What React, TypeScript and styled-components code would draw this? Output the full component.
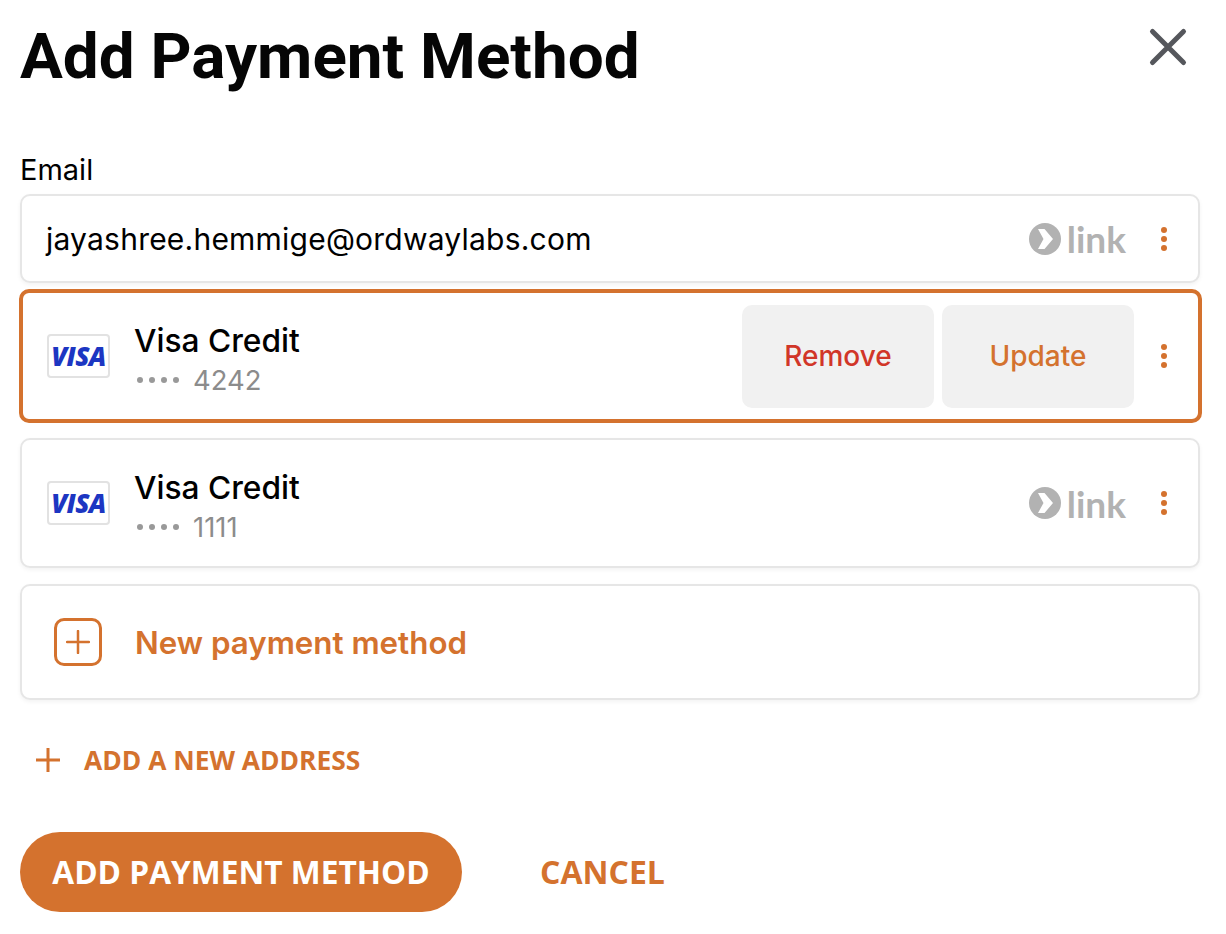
import React from "react";
import styled, { createGlobalStyle } from "styled-components";

const ORANGE = "#d4722e";

const Global = createGlobalStyle`
  html, body { margin: 0; padding: 0; background: #fff; }
  body { font-family: Inter, "Liberation Sans", sans-serif; color: #000; }
  * { box-sizing: border-box; }
`;

const Page = styled.div`
  width: 1226px;
  height: 934px;
  padding: 0 26px 0 20px;
  display: flex;
  flex-direction: column;
  overflow: hidden;
`;

const Header = styled.header`
  height: 110px;
  display: flex;
  justify-content: space-between;
  align-items: flex-start;
`;

const Title = styled.h1`
  margin: 18px 0 0;
  font-family: Roboto, sans-serif;
  font-weight: 700;
  font-size: 63.8px;
  line-height: 78px;
  color: #050505;
`;

const CloseButton = styled.button`
  border: 0;
  background: none;
  padding: 0;
  margin: 22px 7px 0 0;
  width: 50px;
  height: 50px;
  display: flex;
  align-items: center;
  justify-content: center;
`;

const Label = styled.label`
  display: block;
  margin-top: 41px;
  height: 43px;
  font-size: 29px;
  line-height: 38px;
  font-weight: 400;
`;

const Card = styled.div<{ $h: number; $mt: number; $active?: boolean }>`
  height: ${(p) => p.$h}px;
  margin-top: ${(p) => p.$mt}px;
  margin-left: ${(p) => (p.$active ? -1 : 0)}px;
  margin-right: ${(p) => (p.$active ? -2 : 0)}px;
  border-radius: 10px;
  background: #fff;
  border: ${(p) => (p.$active ? `4px solid ${ORANGE}` : "2px solid #e6e6e6")};
  box-shadow: ${(p) => (p.$active ? "none" : "0 2px 4px rgba(0,0,0,0.05)")};
  padding: 0 24px;
  padding-left: ${(p) => (p.$active ? 24 : 25)}px;
  display: flex;
  align-items: center;
`;

const EmailRow = styled.span`
  margin-left: -1px;
  font-size: 30px;
  letter-spacing: 0.22px;
  flex: 1;
`;

const VisaBadge = styled.div`
  width: 63px;
  height: 44px;
  border: 2px solid #e2e2e2;
  border-radius: 4px;
  display: flex;
  align-items: center;
  justify-content: center;
  font-family: "Open Sans", sans-serif;
  font-style: italic;
  font-weight: 800;
  font-size: 26px;
  letter-spacing: -0.6px;
  color: #1c36c2;
  flex: none;
`;

const CardInfo = styled.div`
  margin-left: 24px;
  flex: 1;
  display: flex;
  flex-direction: column;
  padding-top: 9px;
`;

const CardName = styled.div`
  font-size: 31.7px;
  line-height: 38px;
  font-weight: 500;
`;

const CardNumber = styled.div`
  display: flex;
  align-items: center;
  font-size: 27.4px;
  line-height: 40px;
  color: #8c8c8c;
`;

const Dots = styled.span`
  display: flex;
  gap: 6px;
  margin-right: 14px;
  margin-left: 3px;
`;

const Dot = styled.i`
  width: 6px;
  height: 6px;
  border-radius: 50%;
  background: #999;
`;

const LinkLogo = styled.div`
  display: flex;
  align-items: center;
  gap: 6px;
  color: #b2b2b2;
  font-family: Lato, sans-serif;
  font-weight: 700;
  font-size: 37px;
  line-height: 1;
`;

const Kebab = styled.div`
  width: 8px;
  margin-left: 34px;
  margin-right: 6px;
  display: flex;
  flex-direction: column;
  gap: 3px;
  flex: none;
`;

const KebabDot = styled.i`
  width: 6px;
  height: 6px;
  border-radius: 50%;
  background: ${ORANGE};
  margin: 0 auto;
`;

const ActionButton = styled.button<{ $danger?: boolean }>`
  width: 192px;
  height: 103px;
  border: 0;
  border-radius: 10px;
  background: #f1f1f1;
  font-family: Inter, sans-serif;
  font-size: 28px;
  font-weight: 500;
  color: ${(p) => (p.$danger ? "#d13628" : ORANGE)};
  margin-left: 8px;
`;

const ActionKebab = styled(Kebab)`
  margin-left: 26px;
`;

const PlusBox = styled.div`
  width: 48px;
  height: 48px;
  margin-left: 7px;
  border: 3px solid ${ORANGE};
  border-radius: 10px;
  display: flex;
  align-items: center;
  justify-content: center;
  flex: none;
`;

const NewMethod = styled.span`
  margin-left: 33px;
  padding-top: 2px;
  font-size: 31.3px;
  font-weight: 600;
  color: ${ORANGE};
`;

const AddAddress = styled.div`
  margin-top: 40px;
  height: 40px;
  display: flex;
  align-items: center;
  padding-left: 16px;
  gap: 24px;
  font-family: "Open Sans", sans-serif;
  font-weight: 700;
  font-size: 26.4px;
  color: ${ORANGE};
`;

const Footer = styled.div`
  margin-top: 52px;
  display: flex;
  align-items: center;
`;

const Primary = styled.button`
  width: 442px;
  height: 80px;
  padding: 0 0 2px;
  border: 0;
  border-radius: 40px;
  background: ${ORANGE};
  color: #fff;
  font-family: "Open Sans", sans-serif;
  font-weight: 700;
  font-size: 31.7px;
`;

const Cancel = styled.button`
  margin: -2px 0 0 78px;
  border: 0;
  background: none;
  padding: 0;
  color: ${ORANGE};
  font-family: "Open Sans", sans-serif;
  font-weight: 700;
  font-size: 32px;
`;

const LinkMark = () => (
  <svg width="32" height="32" viewBox="0 0 32 32">
    <circle cx="16" cy="16" r="16" fill="#b2b2b2" />
    <path d="M9 6h6.5l8.5 10-8.5 10H9l5.5-10z" fill="#fff" />
  </svg>
);

const More = ({ as: C = Kebab }: { as?: typeof Kebab }) => (
  <C>
    <KebabDot />
    <KebabDot />
    <KebabDot />
  </C>
);

const Link = () => (
  <LinkLogo>
    <LinkMark />
    <span>link</span>
  </LinkLogo>
);

const Masked = ({ last }: { last: string }) => (
  <CardNumber>
    <Dots>
      <Dot />
      <Dot />
      <Dot />
      <Dot />
    </Dots>
    {last}
  </CardNumber>
);

export default function App() {
  return (
    <Page>
      <Global />
      <Header>
        <Title>Add Payment Method</Title>
        <CloseButton aria-label="Close">
          <svg width="40" height="40" viewBox="0 0 40 40">
            <path d="M4.5 4.5l31 31M35.5 4.5l-31 31" stroke="#55575c" strokeWidth="5" strokeLinecap="round" fill="none" />
          </svg>
        </CloseButton>
      </Header>
      <Label>Email</Label>
      <Card $h={89} $mt={0}>
        <EmailRow>jayashree.hemmige@ordwaylabs.com</EmailRow>
        <Link />
        <More />
      </Card>
      <Card $h={134} $mt={6} $active>
        <VisaBadge>VISA</VisaBadge>
        <CardInfo>
          <CardName>Visa Credit</CardName>
          <Masked last="4242" />
        </CardInfo>
        <ActionButton $danger>Remove</ActionButton>
        <ActionButton>Update</ActionButton>
        <More as={ActionKebab} />
      </Card>
      <Card $h={130} $mt={15}>
        <VisaBadge>VISA</VisaBadge>
        <CardInfo>
          <CardName>Visa Credit</CardName>
          <Masked last="1111" />
        </CardInfo>
        <Link />
        <More />
      </Card>
      <Card $h={116} $mt={16}>
        <PlusBox>
          <svg width="24" height="24" viewBox="0 0 24 24">
            <path d="M12 1v22M1 12h22" stroke={ORANGE} strokeWidth="2.5" strokeLinecap="round" fill="none" />
          </svg>
        </PlusBox>
        <NewMethod>New payment method</NewMethod>
      </Card>
      <AddAddress>
        <svg width="24" height="24" viewBox="0 0 24 24">
          <path d="M12 0v24M0 12h24" stroke={ORANGE} strokeWidth="3" strokeLinecap="round" fill="none" />
        </svg>
        ADD A NEW ADDRESS
      </AddAddress>
      <Footer>
        <Primary>ADD PAYMENT METHOD</Primary>
        <Cancel>CANCEL</Cancel>
      </Footer>
    </Page>
  );
}
